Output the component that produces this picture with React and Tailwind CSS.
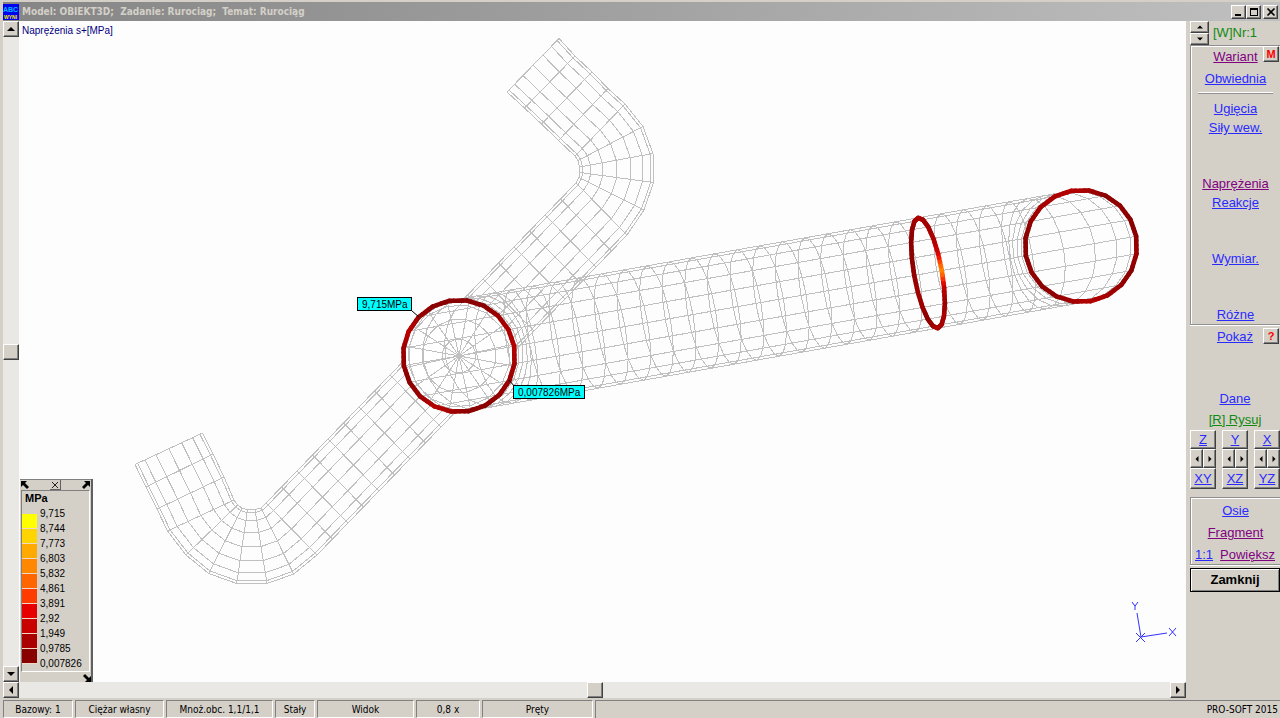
import React from 'react';

// ---- model geometry ----
const R = 56;
const U = [0.985, -0.174]; // pipe axis on screen
const V = [0.174, 0.985]; // across the pipe
const SIDES = 20;

const onRing = (cx, cy, b, t) => {
  const a = (t / SIDES) * 2 * Math.PI;
  return [
    cx + R * Math.cos(a) * V[0] + b * Math.sin(a) * U[0],
    cy + R * Math.cos(a) * V[1] + b * Math.sin(a) * U[1],
  ];
};
const ringPoints = (cx, cy, b) => Array.from({ length: SIDES }, (_, i) => onRing(cx, cy, b, i));
const toPath = (pts, close) => 'M' + pts.map(p => `${p[0].toFixed(1)} ${p[1].toFixed(1)}`).join('L') + (close ? 'Z' : '');

const axisY = x => 273 - (x - 927) * 0.1768;
const mainRings = [];
[[458, 56], [463, 55], [472, 50], [485, 41], [502, 27]].forEach(([x, b]) => mainRings.push([x, axisY(x), b]));
for (let k = 18; k >= -4; k--) {
  const x = 927 - k * 22.63;
  mainRings.push([x, axisY(x), 14]);
}
[[1036, 27], [1053, 41], [1066, 50], [1075, 55], [1080, 56]].forEach(([x, b]) => mainRings.push([x, axisY(x), b]));
const MAIN = mainRings.map(r => ringPoints(...r));
const MAIN_PATH =
  MAIN.map(r => toPath(r, true)).join('') +
  Array.from({ length: SIDES }, (_, i) => toPath(MAIN.map(r => r[i]))).join('');

// cross sections of the thin pipe: [outer x, outer y, inner x, inner y]
const SECTIONS = [
  [134, 464.5, 201.5, 433], [145, 487, 212, 454], [156, 509, 223, 477], [166.5, 531, 233, 500],
  [185, 555, 236.5, 505], [207.7, 573.5, 241, 508], [235.7, 583.5, 246.5, 510], [266, 583.5, 254, 509.5],
  [292.7, 574, 260, 508],
];
for (let k = 0; k <= 20; k++) {
  SECTIONS.push([316 + k * 15.5, 555 - k * 16, 265 + k * 15.5, 503 - k * 16]);
}
SECTIONS.push(
  [643, 210, 578, 177.5], [652.5, 182.5, 579, 172.5], [652, 153.5, 578.5, 167], [642, 126.5, 577, 160.5],
  [624, 104, 574, 156], [607, 88.5, 557.5, 140.5], [591, 72, 540.5, 124], [574, 56, 523.5, 108], [558, 38.5, 506, 92],
);
const SPLITS = [0, 0.038, 0.146, 0.309, 0.5, 0.691, 0.854, 0.962, 1];
const THIN_PATH =
  SECTIONS.map(([a, b, c, d]) => `M${a} ${b}L${c} ${d}`).join('') +
  SPLITS.map(f => toPath(SECTIONS.map(([a, b, c, d]) => [a + (c - a) * f, b + (d - b) * f]))).join('');

// dished end
const CAP_PATH =
  [17, 37, 51].map(r => toPath(Array.from({ length: 16 }, (_, i) => {
    const a = (i / 16) * 2 * Math.PI + 0.18;
    return [458 + r * Math.cos(a), 356 + r * Math.sin(a)];
  }), true)).join('') +
  Array.from({ length: 16 }, (_, i) => {
    const a = (i / 16) * 2 * Math.PI + 0.18;
    return `M458 356L${(458 + 54 * Math.cos(a)).toFixed(1)} ${(356 + 54 * Math.sin(a)).toFixed(1)}`;
  }).join('');

// ---- stress colours ----
const RAMP = [[0, 139, 0, 0], [0.3, 190, 0, 0], [0.5, 240, 10, 0], [0.7, 255, 90, 0], [1, 255, 150, 0]];
const shade = v => {
  let i = 1;
  while (i < RAMP.length - 1 && v > RAMP[i][0]) i++;
  const [a, b] = [RAMP[i - 1], RAMP[i]];
  const t = (v - a[0]) / (b[0] - a[0]);
  return `rgb(${[1, 2, 3].map(n => Math.round(a[n] + (b[n] - a[n]) * t)).join(',')})`;
};

const STRESSED = [
  { x: 458, y: 356, b: 56, s: [0, 0, 0.05, 0.1, 0.15, 0.25, 0.2, 0.1, 0, 0, 0, 0, 0.1, 0.28, 0.1, 0.05, 0, 0.1, 0.25, 0.15] },
  { x: 927, y: 273, b: 14, s: [0.2, 0.15, 0.18, 0.1, 0.3, 0.9, 0.4, 0.2, 0.15, 0.15, 0.2, 0.15, 0.05, 0, 0, 0.05, 0.12, 0.1, 0, 0.1] },
  { x: 1080, y: 246, b: 56, s: [0.25, 0.15, 0.05, 0, 0.1, 0, 0, 0.05, 0, 0.15, 0.25, 0.2, 0.15, 0.05, 0, 0, 0.05, 0, 0.05, 0.15] },
];

function StressRing({ x, y, b, s }) {
  const pts = ringPoints(x, y, b);
  const parts = [];
  for (let i = 0; i < SIDES; i++) {
    const p = pts[i];
    const q = pts[(i + 1) % SIDES];
    const next = s[(i + 1) % SIDES];
    for (let k = 0; k < 4; k++) {
      const f = k / 4;
      parts.push(
        <line key={`${i}-${k}`} stroke={shade(s[i] + (next - s[i]) * f)}
          x1={p[0] + (q[0] - p[0]) * f} y1={p[1] + (q[1] - p[1]) * f}
          x2={p[0] + (q[0] - p[0]) * (f + 0.25)} y2={p[1] + (q[1] - p[1]) * (f + 0.25)} />
      );
    }
  }
  return <g strokeWidth="4.6" strokeLinecap="round">{parts}</g>;
}

function Model() {
  return (
    <svg viewBox="18 21 1167 661" className="block h-full w-full font-['Liberation_Sans',sans-serif] text-[10px]">
      <g fill="none" stroke="#c0c0c0" shapeRendering="crispEdges">
        <path d={THIN_PATH} />
        <circle cx="458" cy="356" r="56" fill="#fff" stroke="none" />
        <path d={MAIN_PATH} />
        <path d={CAP_PATH} />
      </g>
      {STRESSED.map(r => <StressRing key={r.x} {...r} />)}
      <path d="M411 311L418 317M508 380L514 387" stroke="#000" />
      <g fill="#00ffff" stroke="#000" shapeRendering="crispEdges">
        <rect x="356.5" y="297.5" width="54" height="13" />
        <rect x="512.5" y="385.5" width="71" height="13" />
      </g>
      <text x="361" y="308">9,715MPa</text>
      <text x="517" y="396">0,007826MPa</text>
      <g fill="none" stroke="#3030ff">
        <path d="M1136 613L1140 637L1166 633" />
        <path d="M1135 633L1144 642M1144 633L1135 642" />
        <path d="M1131 602L1134 606L1137 602M1134 606V610" />
        <path d="M1168 628L1175 636M1175 628L1168 636" />
      </g>
    </svg>
  );
}

// ---- chrome ----
const RAISED = 'border border-t-white border-l-white border-b-[#404040] border-r-[#404040] bg-[#d4d0c8] shadow-[inset_-1px_-1px_0_#808080]';
const TRACK = 'bg-[#eae8e4]';

const ARROWS = {
  up: 'M0 6L4 2L8 6Z',
  down: 'M0 2L4 6L8 2Z',
  left: 'M6 0L2 4L6 8Z',
  right: 'M2 0L6 4L2 8Z',
};

function ArrowButton({ dir, label, className = 'h-4 w-4', icon = 'h-2 w-2' }) {
  return (
    <button aria-label={label} className={`flex shrink-0 items-center justify-center ${RAISED} ${className}`}>
      <svg viewBox="0 0 8 8" className={icon}><path d={ARROWS[dir]} /></svg>
    </button>
  );
}

const LINK_COLORS = { blue: 'text-[#2a2aff]', purple: 'text-[#800080]', green: 'text-[#108a10]' };

function Cmd({ children, color = 'blue', className = '' }) {
  return (
    <a href="#" className={`block h-[19px] text-center leading-[19px] underline ${LINK_COLORS[color]} ${className}`}>
      {children}
    </a>
  );
}

function TitleBar() {
  const btn = `flex h-[14px] items-center justify-center ${RAISED}`;
  return (
    <header className="ml-[3px] mt-0.5 flex h-[19px] items-center bg-linear-to-r from-[#858585] to-[#c0c0c0] pr-0.5">
      <svg viewBox="0 0 16 16" className="h-4 w-4 shrink-0">
        <rect width="16" height="16" fill="#0000f0" />
        <text x="0" y="8" fill="#00b8ff" className="font-['Liberation_Sans',sans-serif] text-[7px] font-bold">ABC</text>
        <text x="1" y="15" fill="#ffee00" className="font-['Liberation_Sans',sans-serif] text-[5px] font-bold">WYNI</text>
      </svg>
      <h1 className="ml-[3px] flex-1 whitespace-pre font-['DejaVu_Sans_Condensed','DejaVu_Sans',sans-serif] text-[10px] font-bold text-[#d4d0c8]">
        Model: OBIEKT3D;  Zadanie: Rurociag;  Temat: Rurociąg
      </h1>
      <button aria-label="Minimalizuj" className={`w-[15px] ${btn}`}>
        <svg viewBox="0 0 10 10" className="h-[10px] w-[10px]"><path d="M1 7h6v2H1z" /></svg>
      </button>
      <button aria-label="Maksymalizuj" className={`w-[15px] ${btn}`}>
        <svg viewBox="0 0 10 10" className="h-[10px] w-[10px]"><path d="M1 1.5h8M1.5 1v8M8.5 1v8M1 8.5h8M1 2.5h8" stroke="#000" /></svg>
      </button>
      <button aria-label="Zamknij okno" className={`ml-0.5 w-[15px] ${btn}`}>
        <svg viewBox="0 0 10 10" className="h-[10px] w-[10px]"><path d="M1.5 1.5l7 7M8.5 1.5l-7 7" stroke="#000" strokeWidth="1.6" /></svg>
      </button>
    </header>
  );
}

const LEGEND = [
  ['9,715', 'bg-[#ffff00]'],
  ['8,744', 'bg-[#ffd400]'],
  ['7,773', 'bg-[#ffaa00]'],
  ['6,803', 'bg-[#ff8800]'],
  ['5,832', 'bg-[#ff6600]'],
  ['4,861', 'bg-[#ff3c00]'],
  ['3,891', 'bg-[#e60000]'],
  ['2,92', 'bg-[#c80000]'],
  ['1,949', 'bg-[#aa0000]'],
  ['0,9785', 'bg-[#880000]'],
  ['0,007826', ''],
];

function Legend() {
  const corner = 'h-2 w-2';
  return (
    <section className="absolute bottom-0 left-px w-[73px] border-r-2 border-[#606060] bg-[#d4d0c8]">
      <div className="flex h-[11px] items-center justify-between border-t border-[#808080] px-px">
        <svg viewBox="0 0 8 8" className={corner}><path d="M0 0H6L4 2L8 6L6 8L2 4L0 6Z" /></svg>
        <button aria-label="Zamknij legendę" className="flex h-[10px] w-[11px] items-center justify-center border-r border-b border-[#606060]">
          <svg viewBox="0 0 8 8" className={corner}><path d="M1 1L7 7M7 1L1 7" stroke="#222" /></svg>
        </button>
        <svg viewBox="0 0 8 8" className={corner}><path d="M8 0H2L4 2L0 6L2 8L6 4L8 6Z" /></svg>
      </div>
      <div className="mx-px border border-[#808080] border-r-white border-b-white">
        <h2 className="h-[15px] pl-[3px] text-[11px] font-bold leading-[15px]">MPa</h2>
        <ul className="text-[10px]">
          {LEGEND.map(([value, color]) => (
            <li key={value} className="flex h-[15px] gap-[3px]">
              <span className={`relative top-2 w-[15px] shrink-0 ${color && 'border-b border-[#f0d8c8]'} ${color}`} />
              <span className="leading-[15px]">{value}</span>
            </li>
          ))}
        </ul>
      </div>
      <div className="flex h-[10px] items-end justify-end">
        <svg viewBox="0 0 8 8" className={corner}><path d="M8 8H2L4 6L0 2L2 0L6 4L8 2Z" /></svg>
      </div>
    </section>
  );
}

const VIEWS = [['Z', 'XY'], ['Y', 'XZ'], ['X', 'YZ']];

function SidePanel() {
  const square = `absolute right-px flex h-4 w-4 items-center justify-center text-[11px] font-bold text-[#ff0000] ${RAISED}`;
  const view = `text-[#2a2aff] underline ${RAISED}`;
  return (
    <aside className="w-[94px] shrink-0 pl-1 text-[13px]">
      <div className="flex h-6 items-center gap-1">
        <div className="flex flex-col">
          <ArrowButton dir="up" label="Następny wariant" className="h-3 w-[19px]" icon="h-1.5 w-1.5" />
          <ArrowButton dir="down" label="Poprzedni wariant" className="h-3 w-[19px]" icon="h-1.5 w-1.5" />
        </div>
        <span className="text-[#108a10]">[W]Nr:1</span>
      </div>
      <nav className="relative border border-[#909090] border-r-0 shadow-[inset_1px_1px_0_#fff,0_1px_0_#fff]">
        <button className={`top-0 ${square}`}>M</button>
        <Cmd color="purple" className="mt-px">Wariant</Cmd>
        <Cmd className="mt-[3px]">Obwiednia</Cmd>
        <hr className="mx-[7px] mt-1 h-0.5 border-t border-b border-t-white border-b-[#909090]" />
        <Cmd className="mt-[5px]">Ugięcia</Cmd>
        <Cmd>Siły wew.</Cmd>
        <Cmd color="purple" className="mt-[37px]">Naprężenia</Cmd>
        <Cmd>Reakcje</Cmd>
        <Cmd className="mt-[37px]">Wymiar.</Cmd>
        <Cmd className="mt-[37px]">Różne</Cmd>
      </nav>
      <nav className="relative pt-0.5">
        <button className={`top-[3px] ${square}`}>?</button>
        <Cmd>Pokaż</Cmd>
        <Cmd className="mt-[43px]">Dane</Cmd>
        <Cmd color="green" className="mt-0.5">[R] Rysuj</Cmd>
      </nav>
      <div className="mt-px flex justify-between">
        {VIEWS.map(([axis, plane]) => (
          <div key={axis} className="flex w-[26px] flex-col">
            <button className={`h-[19px] leading-[17px] ${view}`}>{axis}</button>
            <div className="flex">
              <ArrowButton dir="left" label={`Obrót ${axis} w lewo`} className="h-[19px] w-[13px]" icon="h-1.5 w-1.5" />
              <ArrowButton dir="right" label={`Obrót ${axis} w prawo`} className="h-[19px] w-[13px]" icon="h-1.5 w-1.5" />
            </div>
            <button className={`h-[21px] leading-[19px] ${view}`}>{plane}</button>
          </div>
        ))}
      </div>
      <nav className="mt-2 border border-[#909090] border-r-0 pt-[3px] shadow-[inset_1px_1px_0_#fff,0_1px_0_#fff]">
        <Cmd>Osie</Cmd>
        <Cmd color="purple" className="mt-[3px]">Fragment</Cmd>
        <div className="mt-[3px] flex justify-between pl-1 pr-[5px]">
          <Cmd>1:1</Cmd>
          <Cmd color="purple">Powiększ</Cmd>
        </div>
      </nav>
      <button className="mt-[3px] h-6 w-full border border-black font-bold shadow-[inset_1px_1px_0_#fff,inset_-1px_-1px_0_#808080]">
        Zamknij
      </button>
    </aside>
  );
}

function StatusBar() {
  const cell = 'border border-[#808080] border-r-white border-b-white text-center';
  return (
    <footer className="mt-0.5 flex h-[18px] shrink-0 gap-0.5 pl-[3px] font-['DejaVu_Sans_Condensed','DejaVu_Sans',sans-serif] text-[10px] leading-[18px]">
      <span className={`w-[70px] ${cell}`}>Bazowy: 1</span>
      <span className={`w-[89px] ${cell}`}>Ciężar własny</span>
      <span className={`w-[107px] ${cell}`}>Mnoż.obc. 1,1/1,1</span>
      <span className={`w-[40px] ${cell}`}>Stały</span>
      <span className={`w-[97px] ${cell}`}>Widok</span>
      <span className={`w-[64px] ${cell}`}>0,8 x</span>
      <span className={`w-[111px] ${cell}`}>Pręty</span>
      <span className="flex-1 border-t border-l border-[#808080] pr-0.5 text-right">PRO-SOFT 2015</span>
    </footer>
  );
}

export default function App() {
  return (
    <div className="flex h-screen flex-col overflow-hidden bg-[#d4d0c8] font-['Liberation_Sans',Arial,sans-serif] text-black">
      <TitleBar />
      <div className="flex min-h-0 flex-1">
        <div className="ml-[3px] flex min-w-0 flex-1 flex-col">
          <div className="flex min-h-0 flex-1">
            <div className={`flex w-4 shrink-0 flex-col ${TRACK}`}>
              <ArrowButton dir="up" label="W górę" />
              <div className="flex-1" />
              <div className={`h-4 ${RAISED}`} />
              <div className="flex-1" />
              <ArrowButton dir="down" label="W dół" />
            </div>
            <main className="relative min-w-0 flex-1 bg-[#fdfdfd]">
              <p className="absolute left-[3px] top-1 text-[10px] leading-3 text-[#000080]">Naprężenia s+[MPa]</p>
              <Model />
              <Legend />
            </main>
          </div>
          <div className={`flex h-4 shrink-0 ${TRACK}`}>
            <ArrowButton dir="left" label="W lewo" />
            <div className="flex-1" />
            <div className={`w-4 ${RAISED}`} />
            <div className="flex-1" />
            <ArrowButton dir="right" label="W prawo" />
          </div>
        </div>
        <SidePanel />
      </div>
      <StatusBar />
    </div>
  );
}
